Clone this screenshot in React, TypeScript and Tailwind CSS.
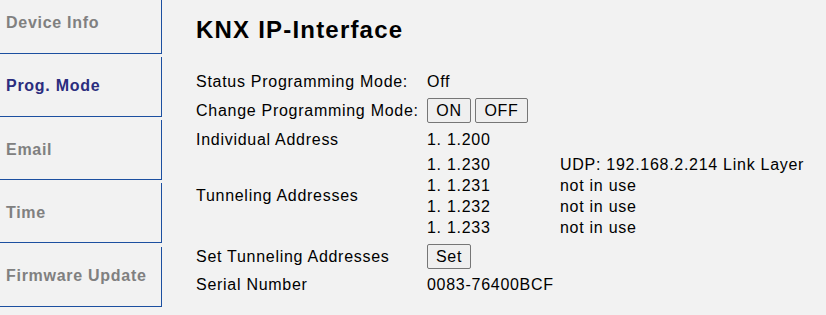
import React from "react";

const tabs = [
  { label: "Device Info", active: false },
  { label: "Prog. Mode", active: true },
  { label: "Email", active: false },
  { label: "Time", active: false },
  { label: "Firmware Update", active: false },
];

const tunnels = [
  { addr: "1. 1.230", state: "UDP: 192.168.2.214 Link Layer" },
  { addr: "1. 1.231", state: "not in use" },
  { addr: "1. 1.232", state: "not in use" },
  { addr: "1. 1.233", state: "not in use" },
];

const Btn: React.FC<{ children: React.ReactNode; w: string }> = ({ children, w }) => (
  <button
    className={`h-[25px] ${w} rounded-[2px] border border-[#767676] bg-[#efefef] text-[16px] leading-[18px] tracking-[0.04em] text-black`}
  >
    {children}
  </button>
);

const App: React.FC = () => {
  return (
    <div
      className="flex h-[315px] w-[826px] overflow-hidden bg-[#f2f2f2] text-black tracking-[0.045em]"
      style={{ fontFamily: '"Liberation Sans", Arial, sans-serif' }}
    >
      {/* Tabs */}
      <div className="-mt-[6.5px] flex w-[162px] shrink-0 flex-col gap-[3.25px]">
        {tabs.map((t) => (
          <div
            key={t.label}
            className={`flex h-[60px] shrink-0 items-center border-r border-b border-[#1c4fa0] pl-[6px] text-[16px] font-bold ${
              t.active ? "text-[#2b2d7e]" : "text-[#808080]"
            }`}
          >
            {t.label}
          </div>
        ))}
      </div>

      {/* Main */}
      <div className="flex flex-col pl-[34px] pt-[16px]">
        <h1 className="text-[24px] leading-[28px] font-bold tracking-[0.05em]">KNX IP-Interface</h1>

        <div className="mt-[28px] flex flex-col gap-[4px] text-[16px] leading-[18px]">
          <div className="grid h-[20px] grid-cols-[231px_auto] items-center">
            <span>Status Programming Mode:</span>
            <span>Off</span>
          </div>
          <div className="grid h-[29px] grid-cols-[231px_auto] items-center">
            <span>Change Programming Mode:</span>
            <div className="flex gap-[4px]">
              <Btn w="w-[44px]">ON</Btn>
              <Btn w="w-[53px]">OFF</Btn>
            </div>
          </div>
          <div className="grid h-[21px] grid-cols-[231px_auto] items-center">
            <span>Individual Address</span>
            <span>1. 1.200</span>
          </div>
          <div className="grid h-[84px] grid-cols-[231px_133px_auto] items-center">
            <span>Tunneling Addresses</span>
            <div className="flex flex-col">
              {tunnels.map((t) => (
                <span key={t.addr} className="flex h-[21px] items-center">
                  {t.addr}
                </span>
              ))}
            </div>
            <div className="flex flex-col">
              {tunnels.map((t) => (
                <span key={t.addr} className="flex h-[21px] items-center">
                  {t.state}
                </span>
              ))}
            </div>
          </div>
          <div className="grid h-[29px] grid-cols-[231px_auto] items-center">
            <span>Set Tunneling Addresses</span>
            <div className="flex">
              <Btn w="w-[44px]">Set</Btn>
            </div>
          </div>
          <div className="grid h-[20px] grid-cols-[231px_auto] items-center">
            <span>Serial Number</span>
            <span>0083-76400BCF</span>
          </div>
        </div>
      </div>
    </div>
  );
};

export default App;
